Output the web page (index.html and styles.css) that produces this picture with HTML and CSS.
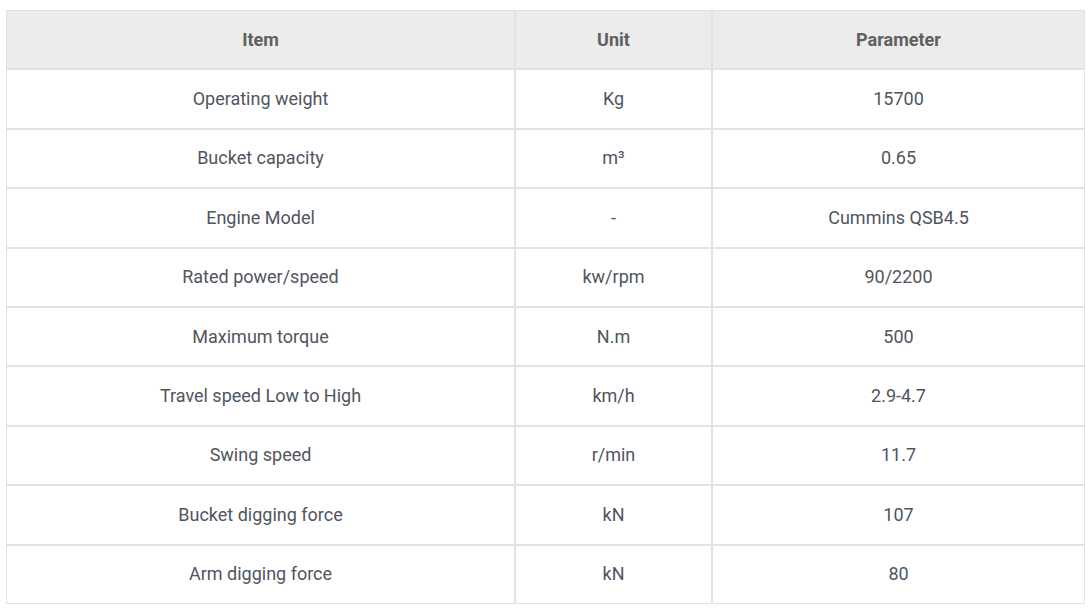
FILE: index.html
```html
<!DOCTYPE html>
<html lang="en">
<head>
<meta charset="utf-8">
<title>Specifications</title>
<link rel="stylesheet" href="styles.css">
</head>
<body>
<div class="wrap">
<table class="spec">
  <colgroup>
    <col class="c1"><col class="c2"><col class="c3">
  </colgroup>
  <thead>
    <tr><th>Item</th><th>Unit</th><th>Parameter</th></tr>
  </thead>
  <tbody>
    <tr><td>Operating weight</td><td>Kg</td><td>15700</td></tr>
    <tr><td>Bucket capacity</td><td>m³</td><td>0.65</td></tr>
    <tr><td>Engine Model</td><td>-</td><td>Cummins QSB4.5</td></tr>
    <tr><td>Rated power/speed</td><td>kw/rpm</td><td>90/2200</td></tr>
    <tr><td>Maximum torque</td><td>N.m</td><td>500</td></tr>
    <tr><td>Travel speed Low to High</td><td>km/h</td><td>2.9-4.7</td></tr>
    <tr><td>Swing speed</td><td>r/min</td><td>11.7</td></tr>
    <tr><td>Bucket digging force</td><td>kN</td><td>107</td></tr>
    <tr><td>Arm digging force</td><td>kN</td><td>80</td></tr>
  </tbody>
</table>
</div>
</body>
</html>
```
FILE: styles.css
```css
html, body {
  margin: 0;
  padding: 0;
  background: #fff;
}
.wrap {
  padding: 10px 3px 0 6px;
}
.spec {
  width: 1079px;
  border-collapse: separate;
  border-spacing: 0;
  font-family: Roboto, "Liberation Sans", sans-serif;
  font-size: 18px;
  color: #505560;
  table-layout: fixed;
}
.c1 { width: 509px; }
.c2 { width: 197px; }
.c3 { width: 373px; }
.spec th, .spec td {
  border: 1px solid #e2e2e2;
  text-align: center;
  vertical-align: middle;
  height: 59.4px;
  padding: 0 10px;
  box-sizing: border-box;
  line-height: 22px;
}
.spec th {
  background: #ececec;
  font-weight: 700;
  color: #606060;
}
```
